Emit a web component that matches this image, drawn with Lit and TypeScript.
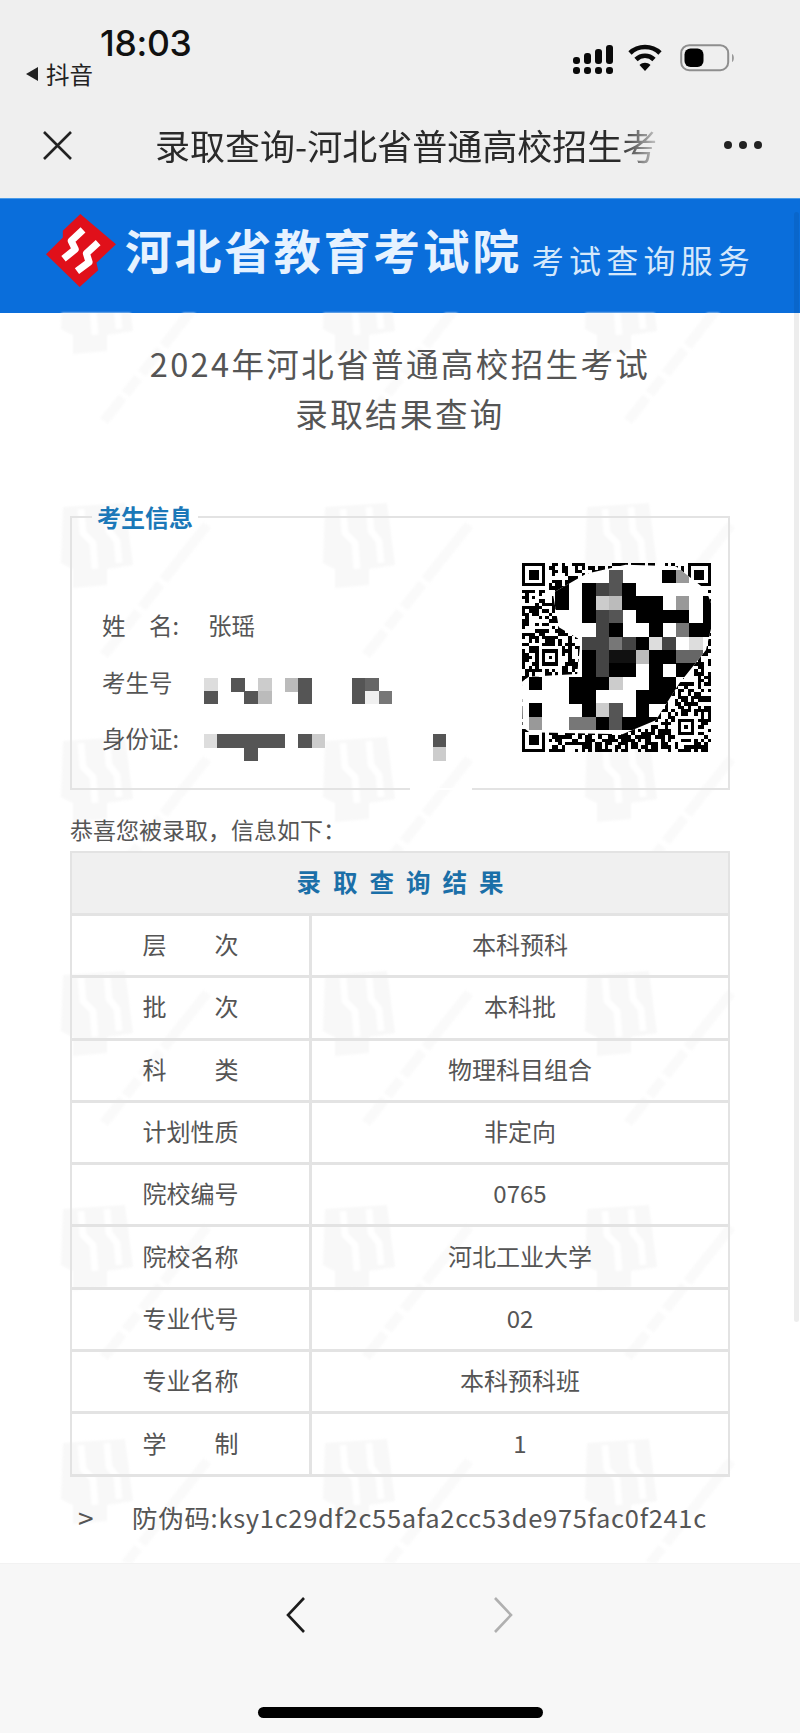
import { LitElement, html, svg, css } from "lit";
import { customElement } from "lit/decorators.js";

type Cell = [number, number, string];

// Big mosaic cells of the QR: [col, row, colour]
const K = "#000";
const QR_BIG: Cell[] = [
  [6,0,"#555"],[10,0,K],[11,0,"#999"],
  [2,1,K],[4,1,K],[5,1,"#444"],[6,1,"#555"],[7,1,K],
  [2,2,K],[4,2,K],[5,2,"#ccc"],[6,2,"#bbb"],[7,2,K],[8,2,K],[9,2,K],[11,2,"#999"],[13,2,K],
  [4,3,K],[5,3,"#444"],[6,3,"#555"],[8,3,K],[9,3,K],[10,3,K],[11,3,K],[13,3,K],
  [5,4,"#444"],[6,4,K],[9,4,K],[11,4,"#777"],[12,4,K],[13,4,K],
  [4,5,"#444"],[5,5,"#444"],[6,5,"#777"],[7,5,"#444"],[8,5,K],[9,5,"#ddd"],[10,5,"#444"],[12,5,"#ddd"],
  [4,6,K],[5,6,"#444"],[6,6,"#111"],[7,6,"#111"],[8,6,"#bbb"],[9,6,K],[10,6,K],[11,6,"#666"],[12,6,"#666"],
  [4,7,K],[5,7,"#444"],[6,7,K],[7,7,K],[9,7,K],[11,7,K],[12,7,K],
  [0,8,K],[3,8,K],[4,8,K],[5,8,K],[6,8,"#ccc"],[9,8,K],[10,8,K],
  [3,9,K],[4,9,K],[8,9,K],[9,9,K],[10,9,K],
  [0,10,K],[4,10,K],[5,10,"#ccc"],[6,10,"#555"],[8,10,K],
  [0,11,"#999"],[3,11,"#777"],[4,11,"#777"],[5,11,K],[6,11,"#555"],[7,11,K],[8,11,K],[9,11,K],
];

const ID_A: Cell[] = [
  [0,0,"#ddd"],[2,0,"#555"],[4,0,"#ccc"],[6,0,"#bbb"],[7,0,"#555"],[11,0,"#555"],[12,0,"#666"],
  [0,1,"#555"],[3,1,"#555"],[4,1,"#bbb"],[7,1,"#555"],[11,1,"#555"],[12,1,"#f0f0f0"],[13,1,"#777"],
];
const ID_B: Cell[] = [
  [0,0,"#ddd"],[1,0,"#555"],[2,0,"#555"],[3,0,"#555"],[4,0,"#555"],[5,0,"#555"],[7,0,"#555"],[8,0,"#ccc"],[17,0,"#555"],
  [3,1,"#555"],[17,1,"#ccc"],
];

function qrFinePath(): string {
  const n = 57;
  let seed = 20240765;
  const rnd = () => {
    seed = (seed * 1664525 + 1013904223) >>> 0;
    return (seed >>> 16) / 65536;
  };
  const grid: number[][] = [];
  for (let y = 0; y < n; y++) {
    const row: number[] = [];
    for (let x = 0; x < n; x++) row.push(rnd() < 0.52 ? 1 : 0);
    grid.push(row);
  }
  const stamp = (ox: number, oy: number, size: number) => {
    for (let y = -1; y <= size; y++)
      for (let x = -1; x <= size; x++) {
        const gx = ox + x, gy = oy + y;
        if (gx < 0 || gy < 0 || gx >= n || gy >= n) continue;
        const edge = x === 0 || y === 0 || x === size - 1 || y === size - 1;
        const outside = x < 0 || y < 0 || x >= size || y >= size;
        const core = size === 7 ? x >= 2 && x <= 4 && y >= 2 && y <= 4 : x === 2 && y === 2;
        grid[gy][gx] = !outside && (edge || core) ? 1 : 0;
      }
  };
  stamp(0, 0, 7);
  stamp(50, 0, 7);
  stamp(0, 50, 7);
  stamp(6, 26, 5);
  stamp(47, 47, 5);
  let d = "";
  for (let y = 0; y < n; y++)
    for (let x = 0; x < n; x++)
      if (grid[y][x]) d += `M${x} ${y}h1v1h-1z`;
  return d;
}

const FINE = qrFinePath();

const ROWS: [string, string][] = [
  ["层次", "本科预科"],
  ["批次", "本科批"],
  ["科类", "物理科目组合"],
  ["计划性质", "非定向"],
  ["院校编号", "0765"],
  ["院校名称", "河北工业大学"],
  ["专业代号", "02"],
  ["专业名称", "本科预科班"],
  ["学制", "1"],
];

@customElement("app-root")
export class AppRoot extends LitElement {
  static styles = css`
    :host {
      display: block;
      width: 800px;
      height: 1733px;
      position: relative;
      overflow: hidden;
      background: #fff;
      font-family: "Noto Sans CJK SC", "Noto Sans", sans-serif;
      color: #555;
    }
    .page { display: flex; flex-direction: column; height: 1733px; }

    .chrome { height: 198px; background: #efefef; display: flex; flex-direction: column; flex: none; }
    .status { height: 100px; position: relative; flex: none; }
    .clock { position: absolute; left: 100px; top: 22px; font: 500 35.5px/44px Inter, "Noto Sans", sans-serif; color: #111; letter-spacing: -0.3px; }
    .back-app { position: absolute; left: 26px; top: 57px; display: flex; align-items: center; gap: 8px; font-size: 23.5px; line-height: 34px; color: #222; }
    .tri { width: 0; height: 0; border-style: solid; border-width: 7px 12px 7px 0; border-color: transparent #222 transparent transparent; }
    .indicators { position: absolute; left: 573px; top: 44px; display: flex; align-items: flex-start; gap: 15px; }
    .nav { flex: 1; display: flex; align-items: center; padding: 0 38px 0 42px; margin-top: -8px; }
    .nav .title {
      margin-left: 82px; width: 505px; flex: none; white-space: nowrap;
      font-size: 35px; line-height: 46px; color: #2a2a2a;
      -webkit-mask-image: linear-gradient(90deg, #000 92%, rgba(0,0,0,.15) 100%);
      mask-image: linear-gradient(90deg, #000 92%, rgba(0,0,0,.15) 100%);
    }
    .dots { margin-left: auto; display: flex; gap: 7px; }
    .dots i { width: 8px; height: 8px; border-radius: 50%; background: #222; display: block; }

    .banner { height: 115px; flex: none; background: #0a6edb; border-top: 1px solid #4a9be8; box-sizing: border-box; display: flex; align-items: center; padding-left: 46px; }
    .banner .logo { flex: none; margin: -11px 9px 0 0; }
    .banner .big { font-size: 47px; line-height: 60px; font-weight: 700; color: #e6f2ff; letter-spacing: 2.6px; white-space: nowrap; margin-top: -15px; }
    .banner .small { font-size: 32px; line-height: 40px; color: #d5e8fb; letter-spacing: 5.2px; margin-left: 10px; margin-top: 6px; white-space: nowrap; font-weight: 400; }

    main { flex: 1; position: relative; padding: 25px 70px 0; box-sizing: border-box; min-height: 0; }
    .wm { position: absolute; inset: 0; width: 800px; height: 100%; filter: blur(1px); }
    .content { position: relative; }
    h1 { margin: 0; text-align: center; font-weight: 400; font-size: 32.5px; line-height: 50px; letter-spacing: 2.4px; color: #555; }

    fieldset { margin: 65px 0 0; padding: 32px 17px 0 30px; border: 2px solid #e3e3e3; height: 287px; box-sizing: border-box; display: flex; position: relative; min-width: 0; }
    legend { margin-left: -10px; padding: 0 5px; font-size: 24px; line-height: 28px; font-weight: 700; color: #1b78b8; }
    .gap { position: absolute; left: 338px; bottom: -2px; width: 62px; height: 2px; background: #fff; }
    .info { flex: 1; padding-top: 48px; display: flex; flex-direction: column; gap: 28.5px; }
    .line { display: flex; align-items: center; height: 28px; font-size: 23.5px; line-height: 28px; position: relative; }
    .line .label { width: 106px; flex: none; white-space: pre; }
    .line svg { position: absolute; left: 102px; top: 10px; }
    .qr { flex: none; display: block; }

    .note { margin: 24px 0 0; font-size: 23px; line-height: 30px; height: 32px; white-space: nowrap; }

    .result { display: grid; grid-template-columns: 240px 1fr; border: 2px solid #e3e3e3; border-bottom: 0; margin-top: 5px; }
    .result .head { grid-column: 1 / 3; height: 56px; padding-bottom: 4px; background: #f0f0f0; color: #1b6fa8; font-weight: 700; font-size: 24.5px; letter-spacing: 12px; padding-left: 12px; display: flex; align-items: center; justify-content: center; border-bottom: 3px solid #e3e3e3; box-sizing: content-box; }
    .cell { height: 55.3px; padding-bottom: 4px; border-bottom: 3px solid #e3e3e3; display: flex; align-items: center; justify-content: center; font-size: 24px; }
    .cell.left { border-right: 3px solid #e3e3e3; }
    .cell.left span { width: 96px; text-align: justify; text-align-last: justify; display: block; }

    .code { display: flex; align-items: center; margin-top: 22px; font-size: 25.5px; line-height: 36px; white-space: nowrap; letter-spacing: 0.7px; }
    .code .gt { width: 62px; padding-left: 8px; box-sizing: border-box; font-size: 28px; flex: none; letter-spacing: 0; }

    .bottom { height: 170px; background: #f7f7f7; flex: none; border-top: 1px solid #f2f2f2; box-sizing: border-box; display: flex; flex-direction: column; align-items: center; position: relative; }
    .arrows { display: flex; gap: 187px; margin-top: 33px; margin-left: -1px; }
    .home { position: absolute; left: 258px; top: 143px; width: 285px; height: 11px; border-radius: 6px; background: #000; }
    .scroll { position: absolute; left: 794px; top: 212px; width: 5px; height: 1110px; background: rgba(0,0,0,.07); border-radius: 3px; }
  `;

  private mosaic(cells: Cell[], cols: number, rows: number) {
    const s = 13.45;
    return html`<svg width=${cols * s} height=${rows * s} viewBox="0 0 ${cols} ${rows}" shape-rendering="crispEdges">
      ${cells.map(([x, y, c]) => svg`<rect x=${x} y=${y} width="1.02" height="1.02" fill=${c}></rect>`)}
    </svg>`;
  }

  private qr() {
    const blob = "M40 395 L60 380 L205 372 L215 270 L150 232 L132 130 L232 72 L350 45 L500 50 L590 120 L616 190 L590 300 L510 400 L440 510 L340 552 L62 546 L42 530 Z";
    return html`<svg class="qr" width="189" height="189" viewBox="40 40 565 565">
      <defs><clipPath id="blob"><path d=${blob}></path></clipPath></defs>
      <g transform="translate(40 40) scale(9.912)" shape-rendering="crispEdges"><path d=${FINE} fill="#000"></path></g>
      <path d=${blob} fill="#fff"></path>
      <g clip-path="url(#blob)" shape-rendering="crispEdges">
        ${QR_BIG.map(([x, y, c]) => svg`<rect x=${60 + x * 40} y=${60 + y * 40} width="40.5" height="40.5" fill=${c}></rect>`)}
      </g>
    </svg>`;
  }

  private watermark() {
    return html`<svg class="wm" aria-hidden="true">
      <defs>
        <pattern id="wmark" width="262" height="234" patternUnits="userSpaceOnUse" patternTransform="translate(57 -44)">
          <g fill="none" stroke="#fafafa">
            <path d="M6 4 L68 0 L76 62 L50 66 L50 82 L16 85 L16 66 L4 60 Z" fill="#f8f8f8" stroke="none"></path>
            <path d="M24 6 L26 30 L36 40 L38 66 M50 4 L52 28 L60 38 L62 60" stroke="#fff" stroke-width="7"></path>
            <path d="M150 22 L47 152" stroke-width="10" stroke-dasharray="70 5 30 6 20 5"></path>
          </g>
        </pattern>
      </defs>
      <rect width="800" height="100%" fill="url(#wmark)"></rect>
    </svg>`;
  }

  render() {
    return html`
      <div class="page">
        <div class="chrome">
          <div class="status">
            <div class="clock">18:03</div>
            <div class="back-app"><span class="tri"></span><span>抖音</span></div>
            <div class="indicators">
              <svg width="40" height="30" viewBox="0 0 40 30" fill="#0a0a0a">
                <rect x="0" y="13" width="7" height="7" rx="3"></rect>
                <rect x="11" y="9" width="7" height="11" rx="3"></rect>
                <rect x="22" y="5" width="7" height="15" rx="3"></rect>
                <rect x="33" y="1" width="7" height="19" rx="3"></rect>
                <rect x="0" y="23" width="7" height="7" rx="3"></rect>
                <rect x="11" y="23" width="7" height="7" rx="3"></rect>
                <rect x="22" y="23" width="7" height="7" rx="3"></rect>
                <rect x="33" y="23" width="7" height="7" rx="3"></rect>
              </svg>
              <svg width="34" height="28" viewBox="0 0 34 28" fill="none" stroke="#0a0a0a" stroke-width="4.6">
                <path d="M2 9 C10 1 24 1 32 9"></path>
                <path d="M8 15.5 C13 10.5 21 10.5 26 15.5"></path>
                <path d="M17 27 L11.5 21 C14.5 18 19.5 18 22.5 21 Z" fill="#0a0a0a" stroke="none"></path>
              </svg>
              <svg width="56" height="28" viewBox="0 0 56 28" style="margin-left:3px">
                <rect x="1.2" y="1.2" width="47" height="25" rx="8" fill="none" stroke="#8e8e8e" stroke-width="2"></rect>
                <rect x="4.5" y="4.5" width="19" height="18.5" rx="6" fill="#000"></rect>
                <path d="M52 10 C54.5 11 54.5 17 52 18 Z" fill="#999"></path>
              </svg>
            </div>
          </div>
          <div class="nav">
            <svg width="31" height="31" viewBox="0 0 31 31" fill="none" stroke="#222" stroke-width="2.6" style="flex:none">
              <path d="M2 2 L29 29 M29 2 L2 29"></path>
            </svg>
            <div class="title">录取查询-河北省普通高校招生考</div>
            <div class="dots"><i></i><i></i><i></i></div>
          </div>
        </div>

        <div class="banner">
          <svg class="logo" width="70" height="73" viewBox="50 45 208 217">
            <path d="M152 45 L258 135 L200 190 L205 212 L150 262 L50 165 L100 115 L100 95 Z" fill="#e0101a"></path>
            <path d="M160 92 L125 125 L137 150 L102 178" fill="none" stroke="#fff" stroke-width="21" stroke-linejoin="round"></path>
            <path d="M205 130 L170 162 L178 188 L142 215" fill="none" stroke="#fff" stroke-width="21" stroke-linejoin="round"></path>
          </svg>
          <span class="big">河北省教育考试院</span>
          <span class="small">考试查询服务</span>
        </div>

        <main>
          ${this.watermark()}
          <div class="content">
            <h1>2024年河北省普通高校招生考试<br />录取结果查询</h1>
            <fieldset>
              <legend>考生信息</legend>
              <div class="info">
                <div class="line"><span class="label">姓　名:</span><span>张瑶</span></div>
                <div class="line"><span class="label">考生号</span>${this.mosaic(ID_A, 14, 2)}</div>
                <div class="line"><span class="label">身份证:</span>${this.mosaic(ID_B, 18, 2)}</div>
              </div>
              ${this.qr()}
              <span class="gap"></span>
            </fieldset>
            <p class="note">${"恭喜您被录取\uFF0C信息如下\uFF1A"}</p>
            <div class="result">
              <div class="head">录取查询结果</div>
              ${ROWS.map(([k, v]) => html`
                <div class="cell left"><span>${k}</span></div>
                <div class="cell">${v}</div>
              `)}
            </div>
            <div class="code"><span class="gt">&gt;</span><span>防伪码:ksy1c29df2c55afa2cc53de975fac0f241c</span></div>
          </div>
        </main>

        <div class="bottom">
          <div class="arrows">
            <svg width="20" height="36" viewBox="0 0 20 36" fill="none" stroke="#1c1c1c" stroke-width="2.6"><path d="M18 1 L2 18 L18 35"></path></svg>
            <svg width="20" height="36" viewBox="0 0 20 36" fill="none" stroke="#b0b0b0" stroke-width="2.6"><path d="M2 1 L18 18 L2 35"></path></svg>
          </div>
          <div class="home"></div>
        </div>
      </div>
      <div class="scroll"></div>
    `;
  }
}
